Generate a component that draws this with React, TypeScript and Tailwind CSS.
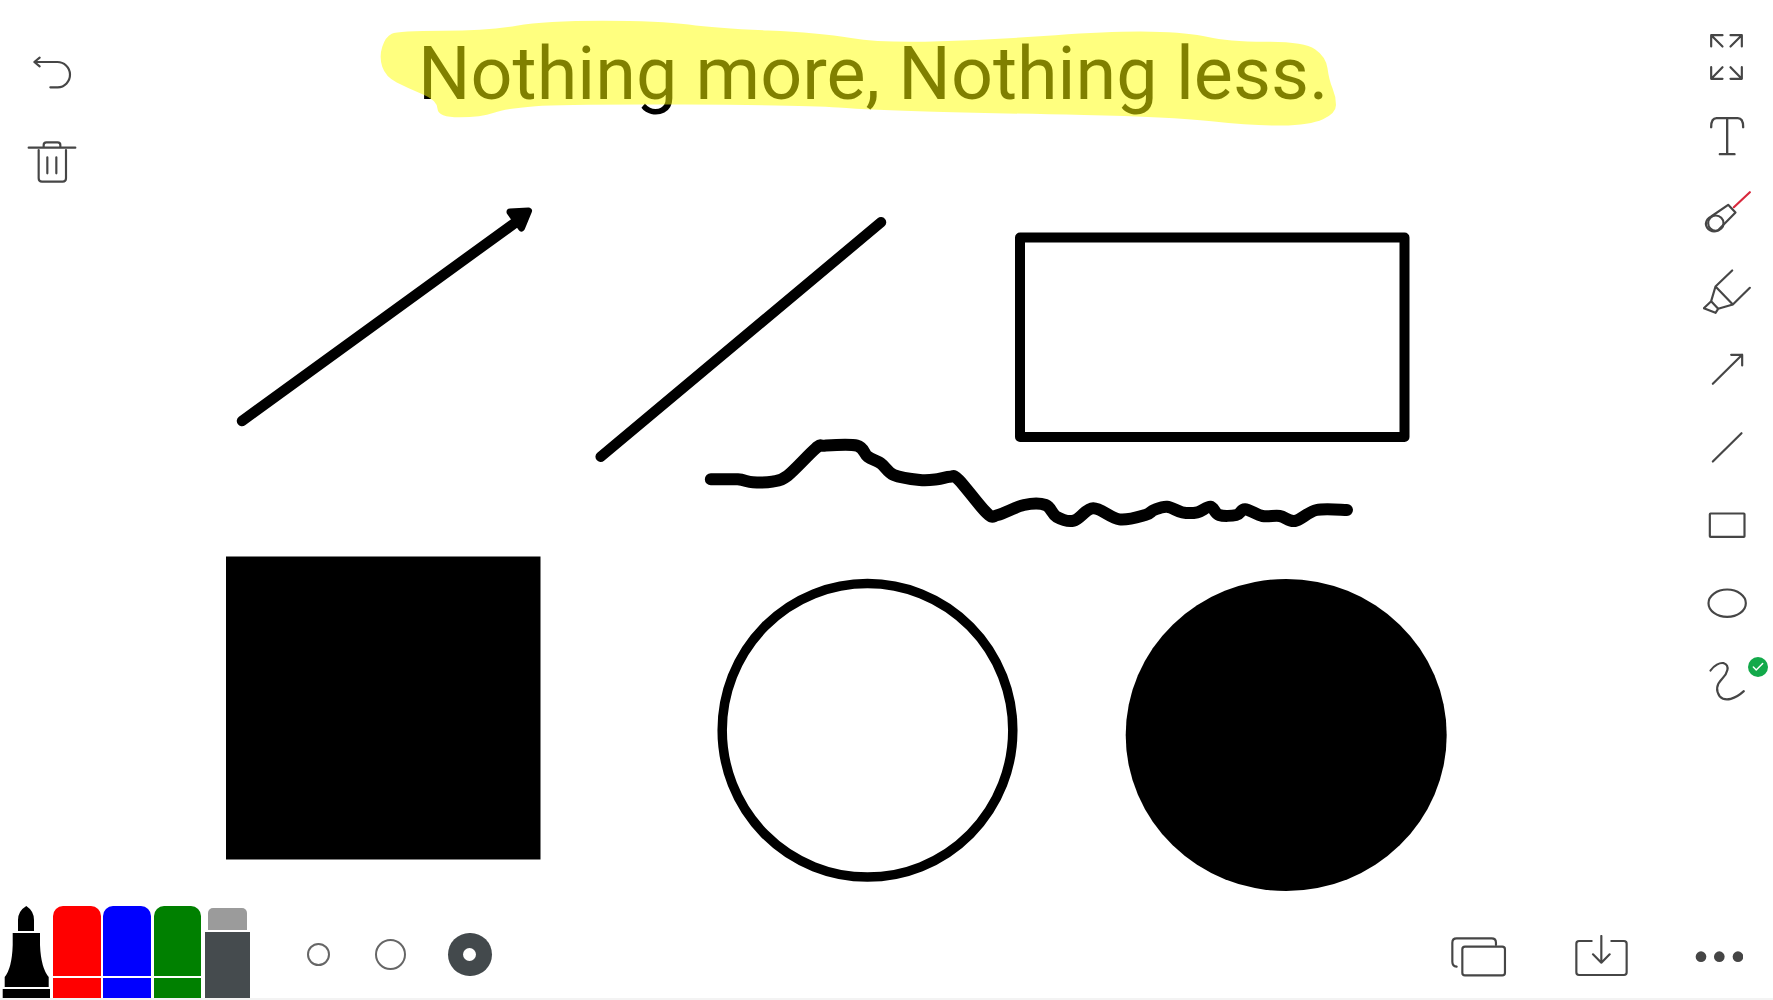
import { Check } from "lucide-react";

type Pt = [number, number];

// soft closed outline through the midpoints, for the highlighter stroke
function blob(pts: Pt[]) {
  const mid = (a: Pt, b: Pt): Pt => [(a[0] + b[0]) / 2, (a[1] + b[1]) / 2];
  const start = mid(pts[pts.length - 1], pts[0]);
  let d = `M${start[0]} ${start[1]}`;
  pts.forEach((p, i) => {
    const m = mid(p, pts[(i + 1) % pts.length]);
    d += ` Q${p[0]} ${p[1]} ${m[0]} ${m[1]}`;
  });
  return d + "Z";
}

// catmull-rom through every point, keeps the pen wobble of the scribble
function penLine(pts: Pt[]) {
  let d = `M${pts[0][0]} ${pts[0][1]}`;
  for (let i = 0; i < pts.length - 1; i++) {
    const p0 = pts[Math.max(i - 1, 0)];
    const p1 = pts[i];
    const p2 = pts[i + 1];
    const p3 = pts[Math.min(i + 2, pts.length - 1)];
    const c1: Pt = [p1[0] + (p2[0] - p0[0]) / 6, p1[1] + (p2[1] - p0[1]) / 6];
    const c2: Pt = [p2[0] - (p3[0] - p1[0]) / 6, p2[1] - (p3[1] - p1[1]) / 6];
    d += ` C${c1[0]} ${c1[1]} ${c2[0]} ${c2[1]} ${p2[0]} ${p2[1]}`;
  }
  return d;
}

const highlight: Pt[] = [
  [398, 30.7], [488, 30.7], [545, 20.7], [660, 20.7], [717, 28.3], [819, 32.7], [883, 43.3],
  [998, 39.3], [1113, 31], [1189, 32.3], [1227, 41.7], [1304, 41.7], [1326, 56.7], [1329, 80],
  [1336, 96.7], [1336, 113.3], [1310, 125], [1253, 126], [1170, 116.7], [998, 113.3], [870, 110],
  [806, 105], [564, 104], [507, 108.3], [481, 117.3], [438, 117.3], [437, 100], [408, 88.3],
  [385.5, 76.7], [379, 56.7], [385.5, 36.7],
];

const scribble: Pt[] = ([
  [48, 178], [110, 178], [145, 187], [190, 185], [225, 167], [290, 85], [310, 77], [385, 77],
  [410, 110], [440, 130], [470, 165], [530, 180], [570, 178], [600, 170], [620, 180], [685, 280],
  [710, 285], [770, 255], [820, 255], [845, 290], [885, 302], [930, 265], [990, 298], [1050, 285],
  [1070, 270], [1100, 260], [1135, 277], [1170, 277], [1200, 260], [1220, 285], [1260, 285],
  [1280, 268], [1320, 288], [1360, 288], [1395, 303], [1445, 270], [1515, 270],
] as Pt[]).map(([x, y]): Pt => [690 + x / 2.306, 420 + y / 3]);

function Board() {
  return (
    <svg className="absolute inset-0 h-full w-full" viewBox="0 0 1773 1000">
      <text x="418" y="99" fill="#000" className="font-['Roboto',sans-serif] text-[73.7px]">
        Nothing more, Nothing less.
      </text>
      <path d={blob(highlight)} fill="#ffff00" fillOpacity="0.5" />

      <g fill="none" stroke="#000" strokeWidth="10.5" strokeLinecap="round" strokeLinejoin="round">
        <path d="M242 421 L523 217" />
        <path d="M528.5 211 L510 212 L521.5 228 Z" fill="#000" strokeWidth="7" />
        <path d="M600.7 456.7 L881 222.3" />
        <rect x="1020" y="237.5" width="384.5" height="199.5" strokeWidth="10" />
        <path d={penLine(scribble)} strokeWidth="12" />
        <ellipse cx="867.5" cy="730.3" rx="145.3" ry="146.8" strokeWidth="9.5" />
      </g>
      <rect x="226" y="556.5" width="314.5" height="303" fill="#000" />
      <ellipse cx="1286.2" cy="735" rx="160.5" ry="156" fill="#000" />
    </svg>
  );
}

const iconStroke = {
  fill: "none",
  stroke: "#464646",
  strokeWidth: 6.5,
  strokeLinecap: "round",
  strokeLinejoin: "round",
} as const;

function ToolIcon({ box, children }: { box: string; children: React.ReactNode }) {
  return (
    <div className="relative flex h-[78px] w-full items-center justify-center">
      <svg className="h-12 w-12" viewBox={box} {...iconStroke}>
        {children}
      </svg>
    </div>
  );
}

function RightTools() {
  return (
    <div className="flex w-[93px] flex-col pt-[17.5px]">
      <ToolIcon box="67.5 67.5 144 144">
        <path d="M92 108 V74 H126 M93 75 L126 108 M150 74 H184 V108 M183 75 L150 108" />
        <path d="M92 170 V205 H126 M93 204 L126 170 M150 205 H184 V170 M183 204 L150 170" />
      </ToolIcon>
      <ToolIcon box="67.5 301.5 144 144">
        <path d="M92 350 Q92 323 108 323 H172 Q188 323 188 350 M140 323 V431 M118 431 H162" strokeWidth="7" />
      </ToolIcon>
      <ToolIcon box="67.5 535.5 144 144">
        <path d="M92 618 L143 583 L165 606 L112 660 A25 25 0 0 1 76 640 A28 28 0 0 1 92 618 Z" />
        <circle cx="106" cy="638" r="23" />
        <path d="M160 590 L208 545" stroke="#d8283c" />
      </ToolIcon>
      <ToolIcon box="67.5 769.5 144 144">
        <path d="M155 780 L105 828 L157 882 L208 832 M105 828 L92 872 L113 895 L157 882 M92 872 L70 893 L105 907 L113 895" />
      </ToolIcon>
      <ToolIcon box="67.5 13.5 144 144">
        <path d="M97 130 L185 43 M152 43 H185 V75" />
      </ToolIcon>
      <ToolIcon box="67.5 247.5 144 144">
        <path d="M97 363 L183 278" />
      </ToolIcon>
      <ToolIcon box="67.5 481.5 144 144">
        <rect x="88" y="519" width="104" height="70" rx="2" />
      </ToolIcon>
      <ToolIcon box="67.5 715.5 144 144">
        <ellipse cx="140" cy="788" rx="56" ry="41" />
      </ToolIcon>
      <div className="relative">
        <ToolIcon box="67.5 949.5 144 144">
          <path d="M90 990 C100 975 118 965 130 968 C150 975 140 1000 125 1015 C108 1032 105 1050 118 1068 C135 1085 165 1075 190 1052" />
        </ToolIcon>
        <span className="absolute left-[68px] top-[15px] flex h-5 w-5 items-center justify-center rounded-full bg-[#12a94a]">
          <Check className="h-3.5 w-3.5 text-white" strokeWidth={2.5} />
        </span>
      </div>
    </div>
  );
}

function LeftTools() {
  return (
    <div className="flex w-[103px] flex-col items-center gap-[30px] pt-[42px]">
      <svg className="h-[60px] w-[60px]" viewBox="65 35 180 180" {...iconStroke}>
        <path d="M118 82 L102 95 L118 108 M102 95 H170 A38 38 0 0 1 172 171 H150" />
      </svg>
      <svg className="h-[60px] w-[60px]" viewBox="65 306 180 180" {...iconStroke}>
        <path d="M85 353 H225 M130 353 V345 Q130 337 138 337 H172 Q180 337 180 345 V353" />
        <path d="M115 360 V445 Q115 455 125 455 H187 Q197 455 197 445 V360 M141 382 V430 M168 382 V430" />
      </svg>
    </div>
  );
}

const markers = ["bg-[#ff0000]", "bg-[#0000ff]", "bg-[#008000]"];

function BottomBar() {
  return (
    <div className="flex h-[94px] items-stretch border-b-2 border-[#f3f3f3]">
      <svg className="h-[92px] w-[52px]" viewBox="0 906 52 92">
        <path
          d="M18 931 V920 Q18 911 26.3 906 Q34 911 34 920 V931 Z M12.7 933 H40 V945 Q41 968 48.7 977 V987 H4.7 V977 Q12 968 12.7 945 Z M2.7 989 H50 V998 H2.7 Z"
          fill="#000"
        />
      </svg>
      <div className="ml-[1px] flex gap-[2.8px]">
        {markers.map((bg) => (
          <div key={bg} className="flex w-[47.5px] flex-col gap-[2px]">
            <div className={`flex-1 rounded-t-[10px] ${bg}`} />
            <div className={`h-[20.5px] ${bg}`} />
          </div>
        ))}
      </div>
      <div className="ml-[3.7px] flex w-[45.3px] flex-col items-center gap-[1.7px] pt-[1.7px]">
        <div className="h-[22.3px] w-[38.7px] rounded-t-[5px] bg-[#9b9b9b]" />
        <div className="w-full flex-1 bg-[#454b4e]" />
      </div>

      <div className="ml-[57px] flex items-center pt-[4.6px]">
        <div className="h-[23.4px] w-[23.4px] rounded-full border-2 border-[#666666]" />
        <div className="ml-[44.3px] h-[31.4px] w-[31.4px] rounded-full border-2 border-[#666666]" />
        <div className="ml-[42px] flex h-[43.4px] w-[43.4px] items-center justify-center rounded-full bg-[#43494c]">
          <div className="h-[13px] w-[13px] rounded-full bg-white" />
        </div>
      </div>

      <div className="ml-auto flex items-center gap-[66px] pr-[30px] pt-[9.3px]">
        <svg className="h-[43.3px] w-[57.3px]" viewBox="90 75 172 130" {...iconStroke}>
          <path d="M228 105 V98 Q228 85 215 85 H110 Q97 85 97 98 V155 Q97 168 110 170" />
          <rect x="127" y="110" width="128" height="86" rx="8" />
        </svg>
        <svg className="h-[43.3px] w-[55px]" viewBox="465 75 165 130" {...iconStroke}>
          <path d="M518 93 H480 Q472 93 472 101 V187 Q472 195 480 195 H615 Q623 195 623 187 V101 Q623 93 615 93 H577" />
          <path d="M547 78 V158 M522 133 L547 158 L572 133" />
        </svg>
        <svg className="h-[43.3px] w-[48.3px]" viewBox="825 75 145 130" fill="#454545">
          <circle cx="843" cy="140" r="16" />
          <circle cx="898" cy="140" r="16" />
          <circle cx="954" cy="140" r="16" />
        </svg>
      </div>
    </div>
  );
}

export default function App() {
  return (
    <div className="relative flex h-[1000px] w-[1773px] flex-col overflow-hidden bg-white">
      <Board />
      <div className="relative flex flex-1 justify-between">
        <LeftTools />
        <RightTools />
      </div>
      <div className="relative">
        <BottomBar />
      </div>
    </div>
  );
}
